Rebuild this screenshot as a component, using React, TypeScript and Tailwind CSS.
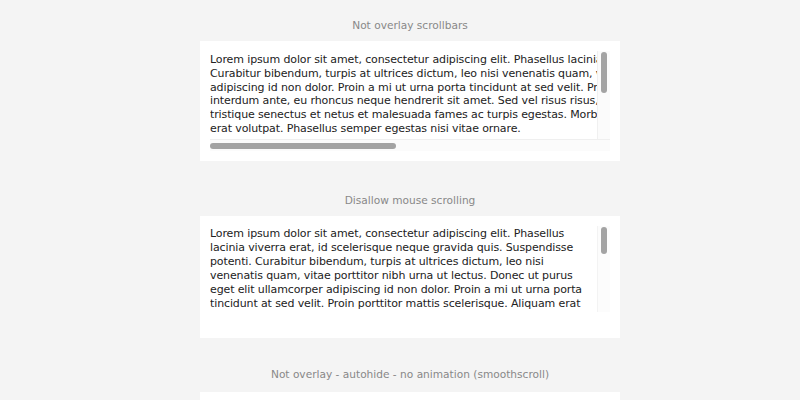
const font = { fontFamily: '"DejaVu Sans", Verdana, sans-serif' };

const wideLines = [
  'Lorem ipsum dolor sit amet, consectetur adipiscing elit. Phasellus lacinia viverra erat, id scelerisque neque gravida quis. Suspendisse potenti.',
  'Curabitur bibendum, turpis at ultrices dictum, leo nisi venenatis quam, vitae porttitor nibh urna ut lectus. Donec ut purus eget elit ullamcorper',
  'adipiscing id non dolor. Proin a mi ut urna porta tincidunt at sed velit. Proin porttitor mattis scelerisque. Aliquam erat volutpat. Nulla',
  'interdum ante, eu rhoncus neque hendrerit sit amet. Sed vel risus risus, ut vestibulum nulla. Pellentesque habitant morbi',
  'tristique senectus et netus et malesuada fames ac turpis egestas. Morbi consequat, turpis ut accumsan tincidunt, magna',
  'erat volutpat. Phasellus semper egestas nisi vitae ornare.',
];

const narrowLines = [
  'Lorem ipsum dolor sit amet, consectetur adipiscing elit. Phasellus',
  'lacinia viverra erat, id scelerisque neque gravida quis. Suspendisse',
  'potenti. Curabitur bibendum, turpis at ultrices dictum, leo nisi',
  'venenatis quam, vitae porttitor nibh urna ut lectus. Donec ut purus',
  'eget elit ullamcorper adipiscing id non dolor. Proin a mi ut urna porta',
  'tincidunt at sed velit. Proin porttitor mattis scelerisque. Aliquam erat',
  'volutpat. Phasellus semper egestas nisi vitae ornare.',
];

function Title({ children }: { children: string }) {
  return (
    <div className="text-center text-[10.6px] leading-[14px] text-[#888]">{children}</div>
  );
}

function Lines({ lines, lh }: { lines: string[]; lh: string }) {
  return (
    <div className={`text-[11px] tracking-[-0.12px] text-[#222] ${lh}`}>
      {lines.map((l, i) => (
        <div key={i} className="whitespace-nowrap">{l}</div>
      ))}
    </div>
  );
}

export default function App() {
  return (
    <div className="min-h-[400px] w-[800px] overflow-hidden bg-[#f4f4f4] pt-[18px]" style={font}>
      <div className="ml-[200px] flex w-[420px] flex-col">
        <Title>Not overlay scrollbars</Title>
        <div className="mt-[9px] h-[120px] bg-white p-[10px]">
          <div className="flex h-[88px]">
            <div className="w-[387px] overflow-hidden pt-[2px]">
              <Lines lines={wideLines} lh="leading-[13.8px]" />
            </div>
            <div className="flex w-[13px] justify-center border-l border-[#f0f0f0] bg-[#fbfbfb] pt-[1px]">
              <div className="h-[41px] w-[6px] rounded-full bg-[#a3a3a3]" />
            </div>
          </div>
          <div className="flex h-[12px] items-center border-t border-[#efefef] bg-[#fbfbfb] pr-[13px]">
            <div className="h-[6px] w-[186px] rounded-full bg-[#a3a3a3]" />
          </div>
        </div>

        <div className="mt-[32px]">
          <Title>Disallow mouse scrolling</Title>
        </div>
        <div className="mt-[9px] h-[122px] bg-white p-[10px]">
          <div className="flex h-[86px]">
            <div className="w-[387px] overflow-hidden pt-[1px]">
              <Lines lines={narrowLines} lh="leading-[14px]" />
            </div>
            <div className="flex w-[13px] justify-center border-l border-[#f3f3f3] bg-[#fcfcfc] pt-[1px]">
              <div className="h-[27px] w-[6px] rounded-full bg-[#a3a3a3]" />
            </div>
          </div>
        </div>

        <div className="mt-[29px]">
          <Title>Not overlay - autohide - no animation (smoothscroll)</Title>
        </div>
        <div className="mt-[11px] h-[120px] bg-white" />
      </div>
    </div>
  );
}
